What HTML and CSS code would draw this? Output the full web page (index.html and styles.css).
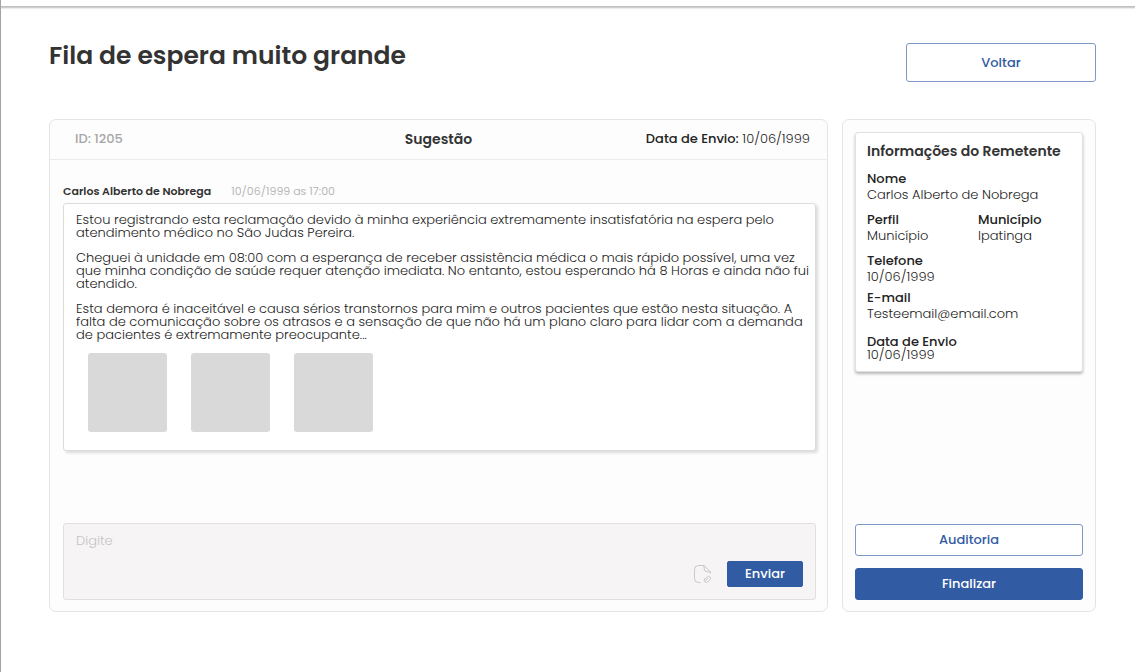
FILE: index.html
```html
<!DOCTYPE html>
<html lang="pt-BR">
<head>
<meta charset="utf-8">
<meta name="viewport" content="width=device-width, initial-scale=1">
<title>Fila de espera muito grande</title>
<link rel="stylesheet" href="styles.css">
</head>
<body>
<div class="topbar"></div>
<main class="page">
  <header class="page-header">
    <h1 class="page-title">Fila de espera muito grande</h1>
    <button class="btn btn-outline btn-back" type="button">Voltar</button>
  </header>
  <div class="columns">
    <section class="panel ticket">
      <header class="ticket-header">
        <span class="ticket-id">ID: 1205</span>
        <h2 class="ticket-type">Sugestão</h2>
        <p class="ticket-date"><strong>Data de Envio:</strong> 10/06/1999</p>
      </header>
      <div class="ticket-body">
        <div class="message-meta">
          <strong class="author">Carlos Alberto de Nobrega</strong>
          <time class="sent">10/06/1999 as 17:00</time>
        </div>
        <article class="message">
          <p>Estou registrando esta reclamação devido à minha experiência extremamente insatisfatória na espera pelo<br>atendimento médico no São Judas Pereira.</p>
          <p>Cheguei à unidade em 08:00 com a esperança de receber assistência médica o mais rápido possível, uma vez<br>que minha condição de saúde requer atenção imediata. No entanto, estou esperando há 8 Horas e ainda não fui<br>atendido.</p>
          <p>Esta demora é inaceitável e causa sérios transtornos para mim e outros pacientes que estão nesta situação. A<br>falta de comunicação sobre os atrasos e a sensação de que não há um plano claro para lidar com a demanda<br>de pacientes é extremamente preocupante...</p>
          <div class="attachments">
            <div class="thumb"></div>
            <div class="thumb"></div>
            <div class="thumb"></div>
          </div>
        </article>
        <form class="composer">
          <textarea class="composer-input" placeholder="Digite" aria-label="Digite"></textarea>
          <div class="composer-actions">
            <button class="attach" type="button" aria-label="Anexar arquivo">
              <svg viewBox="0 0 20 20" width="20" height="20" fill="none" stroke="currentColor" stroke-linecap="round" stroke-linejoin="round">
                <path d="M7 18.500H5.500Q1.500 18.500 1.500 14.500V5.500Q1.500 1.500 5.500 1.500H11L17.500 8V9"/>
                <path d="M11 1.500V4Q11 8 15 8H17.500"/>
                <path d="M12.500 14.500l1.700-1.500a1.900 1.900 0 0 1 2.800 2.700l-2 2a2.300 2.300 0 0 1-3.300-3.200M12.500 16.500l2-1.800"/>
              </svg>
            </button>
            <button class="btn btn-primary btn-send" type="button">Enviar</button>
          </div>
        </form>
      </div>
    </section>
    <aside class="panel side">
      <section class="sender">
        <h2 class="sender-title">Informações do Remetente</h2>
        <dl class="fields">
          <div class="field wide"><dt>Nome</dt><dd>Carlos Alberto de Nobrega</dd></div>
          <div class="field"><dt>Perfil</dt><dd>Município</dd></div>
          <div class="field"><dt>Município</dt><dd>Ipatinga</dd></div>
          <div class="field wide phone"><dt>Telefone</dt><dd>10/06/1999</dd></div>
          <div class="field wide email"><dt>E-mail</dt><dd>Testeemail@email.com</dd></div>
          <div class="field wide date"><dt>Data de Envio</dt><dd>10/06/1999</dd></div>
        </dl>
      </section>
      <div class="side-actions">
        <button class="btn btn-outline" type="button">Auditoria</button>
        <button class="btn btn-primary" type="button">Finalizar</button>
      </div>
    </aside>
  </div>
</main>
</body>
</html>
```

FILE: styles.css
```css
* {
  box-sizing: border-box;
}

body {
  margin: 0;
  min-height: 100vh;
  border-left: 1px solid #a3a3a3;
  background: #fff;
  color: #222;
  font-family: Poppins, Inter, "Open Sans", sans-serif;
  font-size: 13px;
  font-weight: 300;
  line-height: 16px;
}

h1, h2, p, dl, dd {
  margin: 0;
}

strong, dt {
  font-weight: 500;
}

.topbar {
  height: 6px;
  box-shadow: 0 1px 2px 1px #bdbdbd;
}

.page {
  padding: 37px 39px 60px 48px;
}

.page-header {
  display: flex;
  justify-content: space-between;
  align-items: flex-start;
}

.page-title {
  color: #333;
  font-size: 25px;
  line-height: 26px;
  font-weight: 600;
}

.btn {
  height: 32px;
  padding: 0;
  border: 1px solid #315ba3;
  border-radius: 3px;
  font: inherit;
  font-weight: 500;
}

.btn-outline {
  border-color: #7f98c8;
  background: #fff;
  color: #315ba3;
}

.btn-primary {
  background: #315ba3;
  color: #fff;
}

.btn-back {
  width: 190px;
  height: 39px;
}

.columns {
  display: grid;
  grid-template-columns: minmax(0, 1fr) 254px;
  gap: 14px;
  margin-top: 37px;
}

.panel {
  border: 1px solid #e4e4e4;
  border-radius: 7px;
  background: #fdfdfd;
}

.ticket {
  display: flex;
  flex-direction: column;
  min-height: 493px;
}

.ticket-header {
  display: grid;
  grid-template-columns: 1fr auto 1fr;
  align-items: center;
  height: 40px;
  padding: 0 17px 2px;
  border-bottom: 1px solid #ececec;
}

.ticket-id {
  padding-left: 8px;
  color: #a6a6a6;
  font-weight: 500;
}

.ticket-type {
  color: #333;
  font-size: 14px;
  font-weight: 600;
}

.ticket-date {
  justify-self: end;
}

.ticket-body {
  display: flex;
  flex: 1;
  flex-direction: column;
  padding: 23px 11px 11px 13px;
}

.message-meta {
  display: flex;
  gap: 20px;
  margin-bottom: 4px;
  font-size: 11px;
}

.author {
  color: #333;
  font-weight: 600;
}

.sent {
  color: #b8b8b8;
  font-weight: 400;
}

.message {
  display: flex;
  flex-direction: column;
  gap: 12px;
  padding: 9px 4px 18px 12px;
  border: 1px solid #dcdcdc;
  border-radius: 3px;
  background: #fff;
  box-shadow: 2px 2px 3px #dcdcdc;
  line-height: 13px;
}

.attachments {
  display: flex;
  gap: 24px;
  padding: 0 12px;
}

.thumb {
  width: 79px;
  height: 79px;
  border-radius: 3px;
  background: #d9d9d9;
}

.composer {
  display: flex;
  flex-direction: column;
  margin-top: auto;
  padding: 9px 12px 12px;
  border: 1px solid #e0e0e0;
  border-radius: 3px;
  background: #f6f4f5;
}

.composer-input {
  height: 28px;
  padding: 0;
  border: 0;
  outline: 0;
  background: transparent;
  color: inherit;
  font: inherit;
  resize: none;
}

.composer-input::placeholder {
  color: #c4c4c4;
}

.composer-actions {
  display: flex;
  justify-content: flex-end;
  align-items: center;
  gap: 14px;
}

.attach {
  display: flex;
  padding: 0;
  border: 0;
  background: none;
  color: #c8c8c8;
}

.btn-send {
  width: 76px;
  height: 26px;
  border-radius: 2px;
}

.side {
  display: flex;
  flex-direction: column;
  justify-content: space-between;
  padding: 12px 12px 11px;
}

.sender {
  padding: 10px 11px;
  border: 1px solid #e2e2e2;
  border-radius: 3px;
  background: #fff;
  box-shadow: 0 2px 3px #b8b8b8;
}

.sender-title {
  margin-bottom: 12px;
  color: #333;
  font-size: 14px;
  font-weight: 600;
  white-space: nowrap;
}

.fields {
  display: grid;
  grid-template-columns: 1fr 93px;
}

.field {
  padding-bottom: 9px;
}

.wide {
  grid-column: 1 / -1;
}

.phone {
  padding-bottom: 5px;
}

.email {
  padding-bottom: 13px;
}

.date {
  padding-bottom: 0;
  line-height: 13px;
}

.side-actions {
  display: grid;
  gap: 12px;
}
```
